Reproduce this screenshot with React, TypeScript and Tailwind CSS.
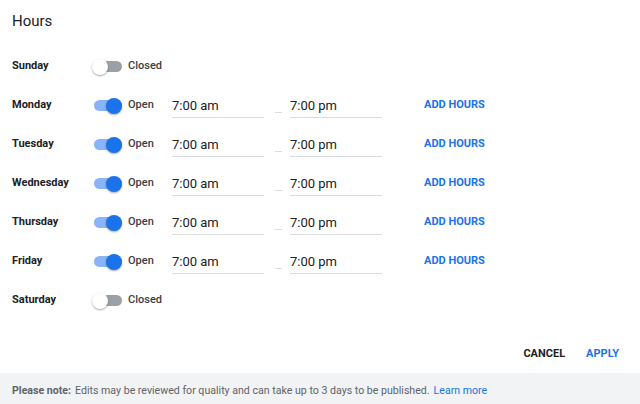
import React from 'react';

interface DayHours {
  day: string;
  open: boolean;
  start?: string;
  end?: string;
}

const days: DayHours[] = [
  { day: 'Sunday', open: false },
  { day: 'Monday', open: true, start: '7:00 am', end: '7:00 pm' },
  { day: 'Tuesday', open: true, start: '7:00 am', end: '7:00 pm' },
  { day: 'Wednesday', open: true, start: '7:00 am', end: '7:00 pm' },
  { day: 'Thursday', open: true, start: '7:00 am', end: '7:00 pm' },
  { day: 'Friday', open: true, start: '7:00 am', end: '7:00 pm' },
  { day: 'Saturday', open: false },
];

const Toggle: React.FC<{ on: boolean }> = ({ on }) => (
  <div className="relative w-[32px] h-[18px] flex items-center">
    <div
      className={`ml-[2px] w-[28px] h-[11px] rounded-full ${on ? 'bg-[#8ab4f8]' : 'bg-[#9aa0a6]'}`}
    />
    <div
      className={`absolute top-[1px] w-[16px] h-[16px] rounded-full shadow-[0_1px_2px_rgba(0,0,0,0.35)] ${
        on ? 'left-[14px] bg-[#1a73e8]' : 'left-0 bg-white'
      }`}
    />
  </div>
);

const TimeField: React.FC<{ value: string }> = ({ value }) => (
  <div className="w-[92px] h-[23px] flex items-center border-b border-[#dadce0] text-[13px] text-[#202124] mt-[1px]">
    {value}
  </div>
);

const App: React.FC = () => {
  return (
    <div className="w-[640px] h-[404px] bg-white flex flex-col font-['Roboto',sans-serif] overflow-hidden">
      <div className="px-3 pt-[11px] h-[47px]">
        <h1 className="text-[15px] leading-5 text-[#202124]">Hours</h1>
      </div>

      <div className="flex flex-col">
        {days.map((d) => (
          <div key={d.day} className="h-[39px] flex items-center pl-3">
            <div className="w-[80px] text-[11px] font-bold text-[#202124]">{d.day}</div>
            <Toggle on={d.open} />
            <div className="w-[48px] pl-[4px] text-[11px] font-medium text-[#3c4043]">
              {d.open ? 'Open' : 'Closed'}
            </div>
            {d.open && (
              <>
                <TimeField value={d.start!} />
                <div className="w-[26px] flex justify-center pl-[2px] pt-[14px]">
                  <div className="w-[7px] h-px bg-[#dadce0]" />
                </div>
                <TimeField value={d.end!} />
                <button className="ml-[42px] text-[11px] font-bold text-[#1a73e8]">
                  ADD HOURS
                </button>
              </>
            )}
          </div>
        ))}
      </div>

      <div className="mt-[16px] h-[36px] flex items-center justify-end pr-[21px] gap-[21px]">
        <button className="text-[11px] font-bold text-[#202124]">CANCEL</button>
        <button className="text-[11px] font-bold text-[#1a73e8]">APPLY</button>
      </div>

      <div className="mt-auto h-[31px] bg-[#f1f3f4] flex items-center px-3 text-[10.6px] text-[#5f6368] pt-[5px]">
        <span className="font-bold mr-1">Please note:</span>
        <span>Edits may be reviewed for quality and can take up to 3 days to be published.</span>
        <a className="ml-1 text-[#1a73e8]">Learn more</a>
      </div>
    </div>
  );
};

export default App;
